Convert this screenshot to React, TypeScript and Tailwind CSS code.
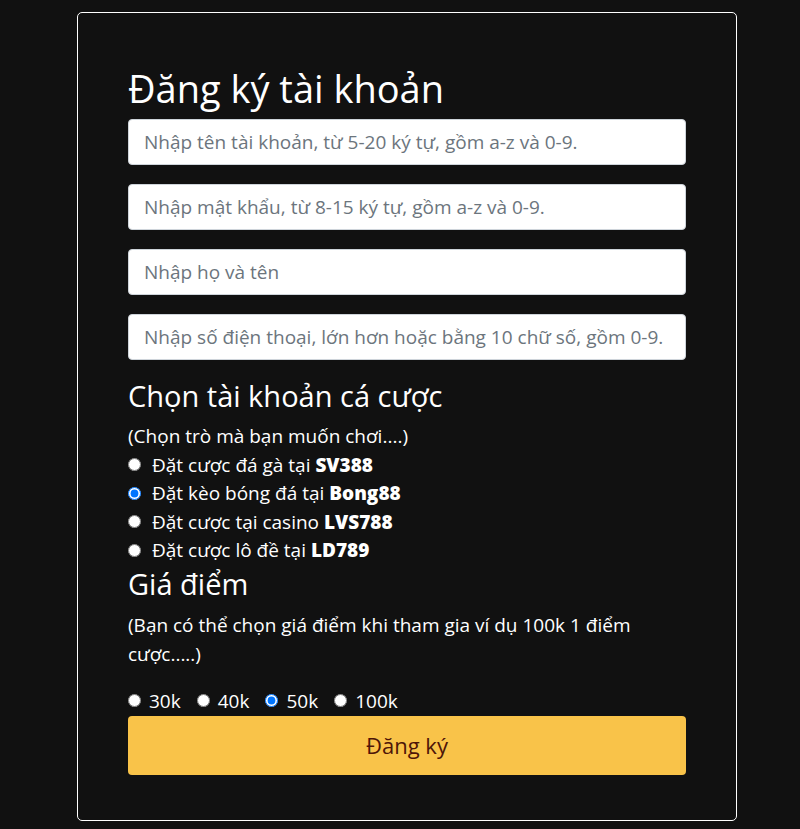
import React, { useState } from 'react';

const games = [
  { id: 'sv388', label: 'Đặt cược đá gà tại ', brand: 'SV388' },
  { id: 'bong88', label: 'Đặt kèo bóng đá tại ', brand: 'Bong88' },
  { id: 'lvs788', label: 'Đặt cược tại casino ', brand: 'LVS788' },
  { id: 'ld789', label: 'Đặt cược lô đề tại ', brand: 'LD789' },
];

const prices = ['30k', '40k', '50k', '100k'];

const placeholders = [
  'Nhập tên tài khoản, từ 5-20 ký tự, gồm a-z và 0-9.',
  'Nhập mật khẩu, từ 8-15 ký tự, gồm a-z và 0-9.',
  'Nhập họ và tên',
  'Nhập số điện thoại, lớn hơn hoặc bằng 10 chữ số, gồm 0-9.',
];

export default function App() {
  const [game, setGame] = useState('bong88');
  const [price, setPrice] = useState('50k');

  return (
    <div className="min-h-screen bg-[#111111] pt-3 font-['Open_Sans',sans-serif] text-white">
      <form
        className="ml-[77px] flex h-[809px] w-[660px] flex-col rounded-[5px] border border-white px-[50px] pt-[52px]"
        onSubmit={(e) => e.preventDefault()}
      >
        <h1 className="text-[38px] leading-[46px] font-normal">Đăng ký tài khoản</h1>

        <div className="mt-[8px] flex flex-col gap-[19px]">
          {placeholders.map((p) => (
            <input
              key={p}
              type="text"
              placeholder={p}
              className="h-[46px] w-full rounded-[4px] border border-[#ced4da] bg-white px-[15px] text-[19px] text-[#495057] placeholder:text-[#6c757d] outline-none"
            />
          ))}
        </div>

        <h2 className="mt-[19px] text-[29px] leading-[34px] font-normal">Chọn tài khoản cá cược</h2>
        <p className="mt-[9px] text-[19px] leading-[28.5px]">(Chọn trò mà bạn muốn chơi....)</p>

        <div className="flex flex-col">
          {games.map((g) => (
            <label key={g.id} className="flex h-[28.5px] items-center text-[19px]">
              <input
                type="radio"
                name="game"
                checked={game === g.id}
                onChange={() => setGame(g.id)}
                className="m-0 mr-[11px] h-[13px] w-[13px]"
              />
              <span>
                {g.label}
                <b className="font-extrabold">{g.brand}</b>
              </span>
            </label>
          ))}
        </div>

        <h2 className="mt-[2px] text-[29px] leading-[34px] font-normal">Giá điểm</h2>
        <p className="mt-[10px] text-[19px] leading-[29px]">
          (Bạn có thể chọn giá điểm khi tham gia ví dụ 100k 1 điểm cược.....)
        </p>

        <div className="mt-[18px] flex h-[28px] items-center">
          {prices.map((p) => (
            <label key={p} className="mr-[16px] flex items-center text-[19px] leading-[28px]">
              <input
                type="radio"
                name="price"
                checked={price === p}
                onChange={() => setPrice(p)}
                className="m-0 mr-[8px] h-[13px] w-[13px]"
              />
              {p}
            </label>
          ))}
        </div>

        <button
          type="submit"
          className="mt-[1px] h-[59px] w-full rounded-[4px] bg-[#f9c349] text-[22px] font-medium text-[#4e1508]"
        >
          Đăng ký
        </button>
      </form>
    </div>
  );
}
